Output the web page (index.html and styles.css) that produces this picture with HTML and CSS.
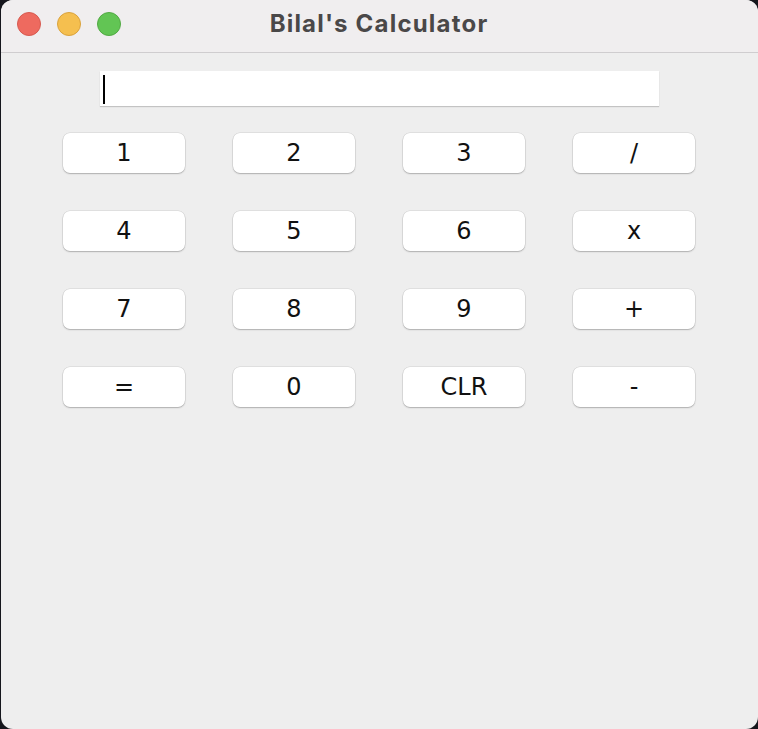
FILE: index.html
```html
<!DOCTYPE html>
<html>
<head>
<meta charset="utf-8">
<title>Bilal's Calculator</title>
<link rel="stylesheet" href="styles.css">
</head>
<body>
<div class="window">
  <div class="titlebar">
    <div class="lights">
      <span class="light red"></span>
      <span class="light yellow"></span>
      <span class="light green"></span>
    </div>
    <div class="title">Bilal's Calculator</div>
  </div>
  <div class="content">
    <div class="display"><span class="caret"></span></div>
    <div class="keys">
      <button class="key">1</button>
      <button class="key">2</button>
      <button class="key">3</button>
      <button class="key">/</button>
      <button class="key">4</button>
      <button class="key">5</button>
      <button class="key">6</button>
      <button class="key">x</button>
      <button class="key">7</button>
      <button class="key">8</button>
      <button class="key">9</button>
      <button class="key">+</button>
      <button class="key">=</button>
      <button class="key">0</button>
      <button class="key">CLR</button>
      <button class="key">-</button>
    </div>
  </div>
</div>
</body>
</html>
```
FILE: styles.css
```css
html, body {
  margin: 0;
  padding: 0;
  background: #15161c;
  width: 758px;
  height: 729px;
  overflow: hidden;
}
.window {
  margin-left: 1px;
  width: 757px;
  height: 729px;
  background: #eeeeee;
  border-radius: 12px;
  overflow: hidden;
  display: flex;
  flex-direction: column;
}
.titlebar {
  height: 53px;
  box-sizing: border-box;
  background: #f0eeef;
  border-bottom: 1px solid #cfcdcf;
  display: flex;
  align-items: flex-start;
  position: relative;
}
.lights {
  display: flex;
  gap: 16px;
  padding-left: 16px;
  padding-top: 12px;
}
.light {
  width: 24px;
  height: 24px;
  border-radius: 50%;
  box-sizing: border-box;
}
.red { background: #ee6a5f; border: 1px solid #d65a50; }
.yellow { background: #f5bf4f; border: 1px solid #d9a23d; }
.green { background: #62c554; border: 1px solid #52a944; }
.title {
  position: absolute;
  left: 0;
  right: 0;
  top: 0;
  height: 46px;
  display: flex;
  align-items: center;
  justify-content: center;
  font-family: "Inter", "Liberation Sans", Arial, sans-serif;
  font-weight: bold;
  font-size: 24px;
  letter-spacing: 1.2px;
  color: #4a4848;
  padding-right: 1px;
}
.content {
  flex: 1;
  padding-top: 18px;
  display: flex;
  flex-direction: column;
  align-items: flex-start;
}
.display {
  width: 559px;
  height: 35px;
  margin-left: 99px;
  background: #ffffff;
  box-shadow: 0 1px 1px rgba(0,0,0,0.18);
  box-sizing: border-box;
  padding: 4px 0 0 3px;
}
.caret {
  display: block;
  width: 2px;
  height: 29px;
  background: #000;
}
.keys {
  margin-top: 27px;
  margin-left: 62px;
  display: grid;
  grid-template-columns: repeat(4, 122px);
  grid-auto-rows: 40px;
  column-gap: 48px;
  row-gap: 38px;
}
.key {
  border: none;
  background: #ffffff;
  border-radius: 7px;
  box-shadow: 0 0 0 0.5px rgba(0,0,0,0.12), 0 1px 1.5px rgba(0,0,0,0.22);
  font-family: "DejaVu Sans", "Noto Sans", sans-serif;
  font-size: 24px;
  color: #111;
  padding: 0;
  line-height: 40px;
}
```
